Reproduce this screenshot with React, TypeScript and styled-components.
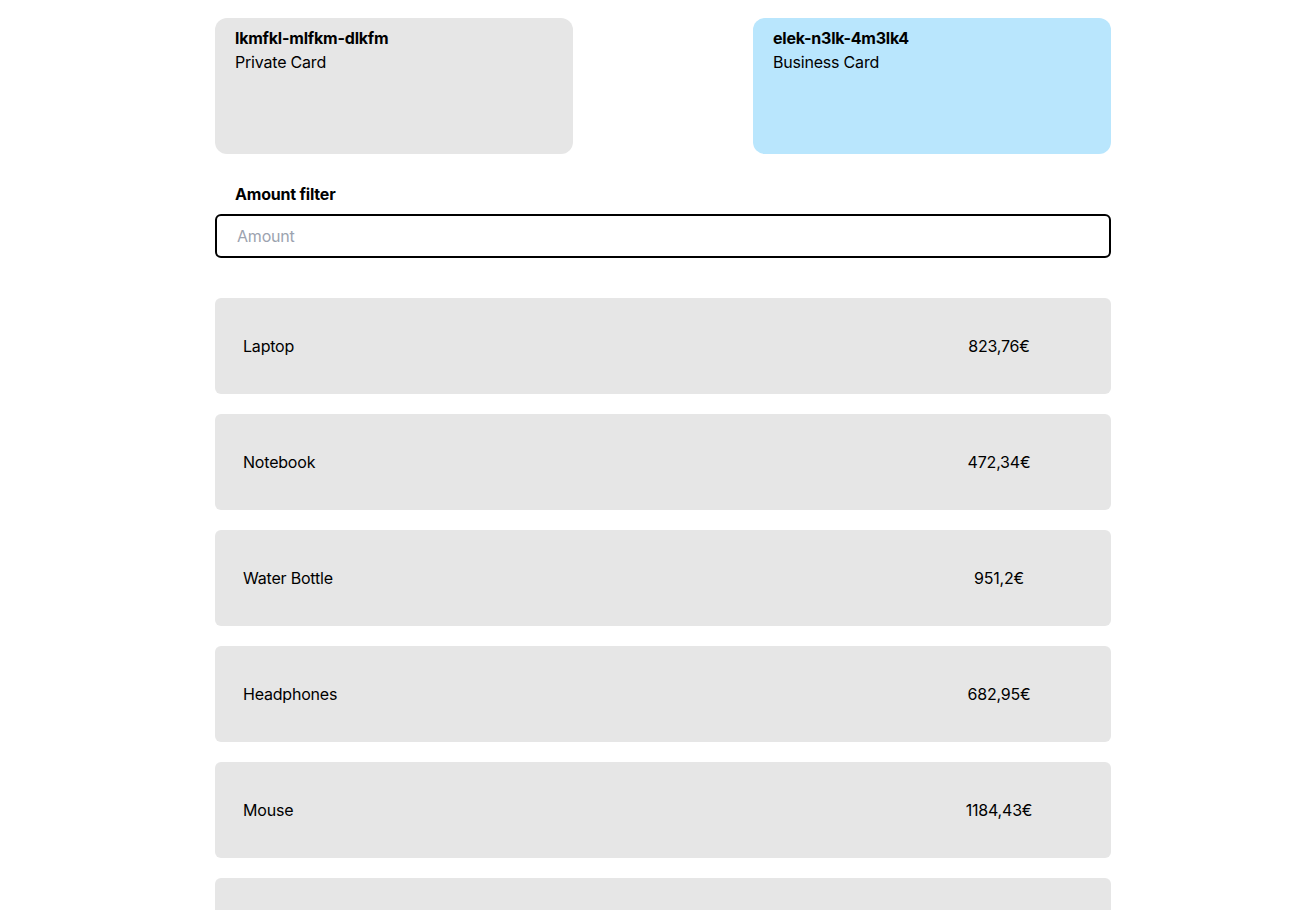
import React from "react";
import styled, { createGlobalStyle } from "styled-components";

const GlobalStyle = createGlobalStyle`
  html, body {
    margin: 0;
    padding: 0;
    background: #ffffff;
    font-family: Inter, "Noto Sans", "Liberation Sans", sans-serif;
    letter-spacing: -0.2px;
    color: #000000;
  }
  * { box-sizing: border-box; }
`;

const Page = styled.main`
  width: 896px;
  margin-left: 215px;
  padding-top: 18px;
  padding-bottom: 40px;
  display: flex;
  flex-direction: column;
`;

const CardRow = styled.div`
  display: flex;
  justify-content: space-between;
`;

const Card = styled.div<{ $active?: boolean }>`
  width: 358px;
  height: 136px;
  border-radius: 12px;
  padding: 8px 20px;
  background: ${(p) => (p.$active ? "#b9e6fd" : "#e6e6e6")};
  display: flex;
  flex-direction: column;
`;

const CardNumber = styled.div`
  font-size: 16px;
  font-weight: 700;
  line-height: 24px;
`;

const CardType = styled.div`
  font-size: 16px;
  line-height: 24px;
`;

const FilterLabel = styled.label`
  margin-top: 28px;
  padding-left: 20px;
  font-size: 16px;
  font-weight: 700;
  line-height: 24px;
  display: block;
`;

const AmountInput = styled.input`
  margin-top: 8px;
  height: 44px;
  width: 100%;
  border: 2px solid #000000;
  border-radius: 6px;
  padding: 0 20px;
  font-family: inherit;
  letter-spacing: inherit;
  font-size: 16px;
  outline: none;
  &::placeholder {
    color: #9ca3af;
  }
`;

const List = styled.div`
  margin-top: 40px;
  display: flex;
  flex-direction: column;
  gap: 20px;
`;

const Row = styled.div`
  height: 96px;
  border-radius: 6px;
  background: #e6e6e6;
  padding: 0 28px;
  display: grid;
  grid-template-columns: repeat(5, 1fr);
  align-items: center;
  font-size: 16px;
  line-height: 24px;
`;

const Name = styled.span`
  grid-column: 1 / span 2;
`;

const Price = styled.span`
  grid-column: 5;
  text-align: center;
`;

const items = [
  { name: "Laptop", price: "823,76€" },
  { name: "Notebook", price: "472,34€" },
  { name: "Water Bottle", price: "951,2€" },
  { name: "Headphones", price: "682,95€" },
  { name: "Mouse", price: "1184,43€" },
  { name: "Keyboard", price: "215,9€" },
];

export default function App() {
  return (
    <>
      <GlobalStyle />
      <Page>
        <CardRow>
          <Card>
            <CardNumber>lkmfkl-mlfkm-dlkfm</CardNumber>
            <CardType>Private Card</CardType>
          </Card>
          <Card $active>
            <CardNumber>elek-n3lk-4m3lk4</CardNumber>
            <CardType>Business Card</CardType>
          </Card>
        </CardRow>
        <FilterLabel htmlFor="amount">Amount filter</FilterLabel>
        <AmountInput id="amount" placeholder="Amount" />
        <List>
          {items.map((it) => (
            <Row key={it.name}>
              <Name>{it.name}</Name>
              <Price>{it.price}</Price>
            </Row>
          ))}
        </List>
      </Page>
    </>
  );
}
